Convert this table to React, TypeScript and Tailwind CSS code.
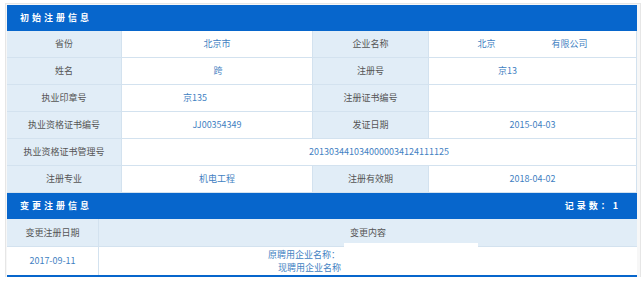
import React from 'react'

const font = { fontFamily: '"Microsoft YaHei", "Noto Sans CJK SC", "Noto Sans", sans-serif' }

const label = 'flex items-center justify-center bg-[#e1edf7] text-[#555] border-b border-r border-[#d3e2ef]'
const value = 'flex items-center justify-center bg-white text-[#3f7fc2] border-b border-r border-[#d3e2ef]'

function SectionHeader({ title, right }: { title: string; right?: string }) {
  return (
    <div className="h-[26px] bg-[#0766cc] flex items-center justify-between pl-[13px] pr-[16px] text-white font-bold text-[9px] tracking-[3px]">
      <span>{title}</span>
      {right && <span>{right}</span>}
    </div>
  )
}

export default function App() {
  return (
    <div className="w-[644px] h-[287px] bg-white pt-[3px] pl-[5px]" style={font}>
      <div className="w-[636px] border border-[#e6e6e6] border-b-0 pl-[1px] pr-[3px] pt-[1px] bg-[#f7f7f7]">
        <SectionHeader title="初始注册信息" />

        <div className="grid grid-cols-[115px_191px_116px_208px] auto-rows-[27px] text-[9px]">
          <div className={label}>省份</div>
          <div className={value}>北京市</div>
          <div className={label}>企业名称</div>
          <div className={value}>
            <span>北京</span>
            <span className="w-[56px]" />
            <span>有限公司</span>
          </div>

          <div className={label}>姓名</div>
          <div className={value}>
            <span className="pl-[2px]">跨</span>
          </div>
          <div className={label}>注册号</div>
          <div className={`${value} !justify-start pl-[69px]`}>京13</div>

          <div className={label}>执业印章号</div>
          <div className={`${value} !justify-start pl-[61px]`}>京135</div>
          <div className={label}>注册证书编号</div>
          <div className={value}></div>

          <div className={label}>执业资格证书编号</div>
          <div className={value}>JJ00354349</div>
          <div className={label}>发证日期</div>
          <div className={value}>2015-04-03</div>

          <div className={label}>执业资格证书管理号</div>
          <div className={`${value} col-span-3`}>2013034410340000034124111125</div>

          <div className={label}>注册专业</div>
          <div className={value}>机电工程</div>
          <div className={label}>注册有效期</div>
          <div className={value}>2018-04-02</div>
        </div>

        <SectionHeader title="变更注册信息" right="记录数：1" />

        <div className="relative grid grid-cols-[92px_538px] text-[9px] border-b-2 border-[#0766cc]">
          <div className="h-[28px] flex items-center justify-center bg-[#e1edf7] text-[#555] border-r border-b border-[#d3e2ef]">
            变更注册日期
          </div>
          <div className="h-[28px] flex items-center justify-center bg-[#e1edf7] text-[#555] border-b border-[#d3e2ef]">
            变更内容
          </div>
          <div className="h-[28px] flex items-center justify-center bg-white text-[#3f7fc2] border-r border-[#d3e2ef]">
            2017-09-11
          </div>
          <div className="h-[28px] bg-white text-[#3f7fc2] flex flex-col justify-center leading-[13px]">
            <div className="w-[241px] text-right">原聘用企业名称：</div>
            <div className="w-[242px] text-right">现聘用企业名称</div>
          </div>
          <div className="absolute left-[337px] top-[24px] w-[134px] h-[32px] bg-white" />
        </div>
      </div>
    </div>
  )
}
